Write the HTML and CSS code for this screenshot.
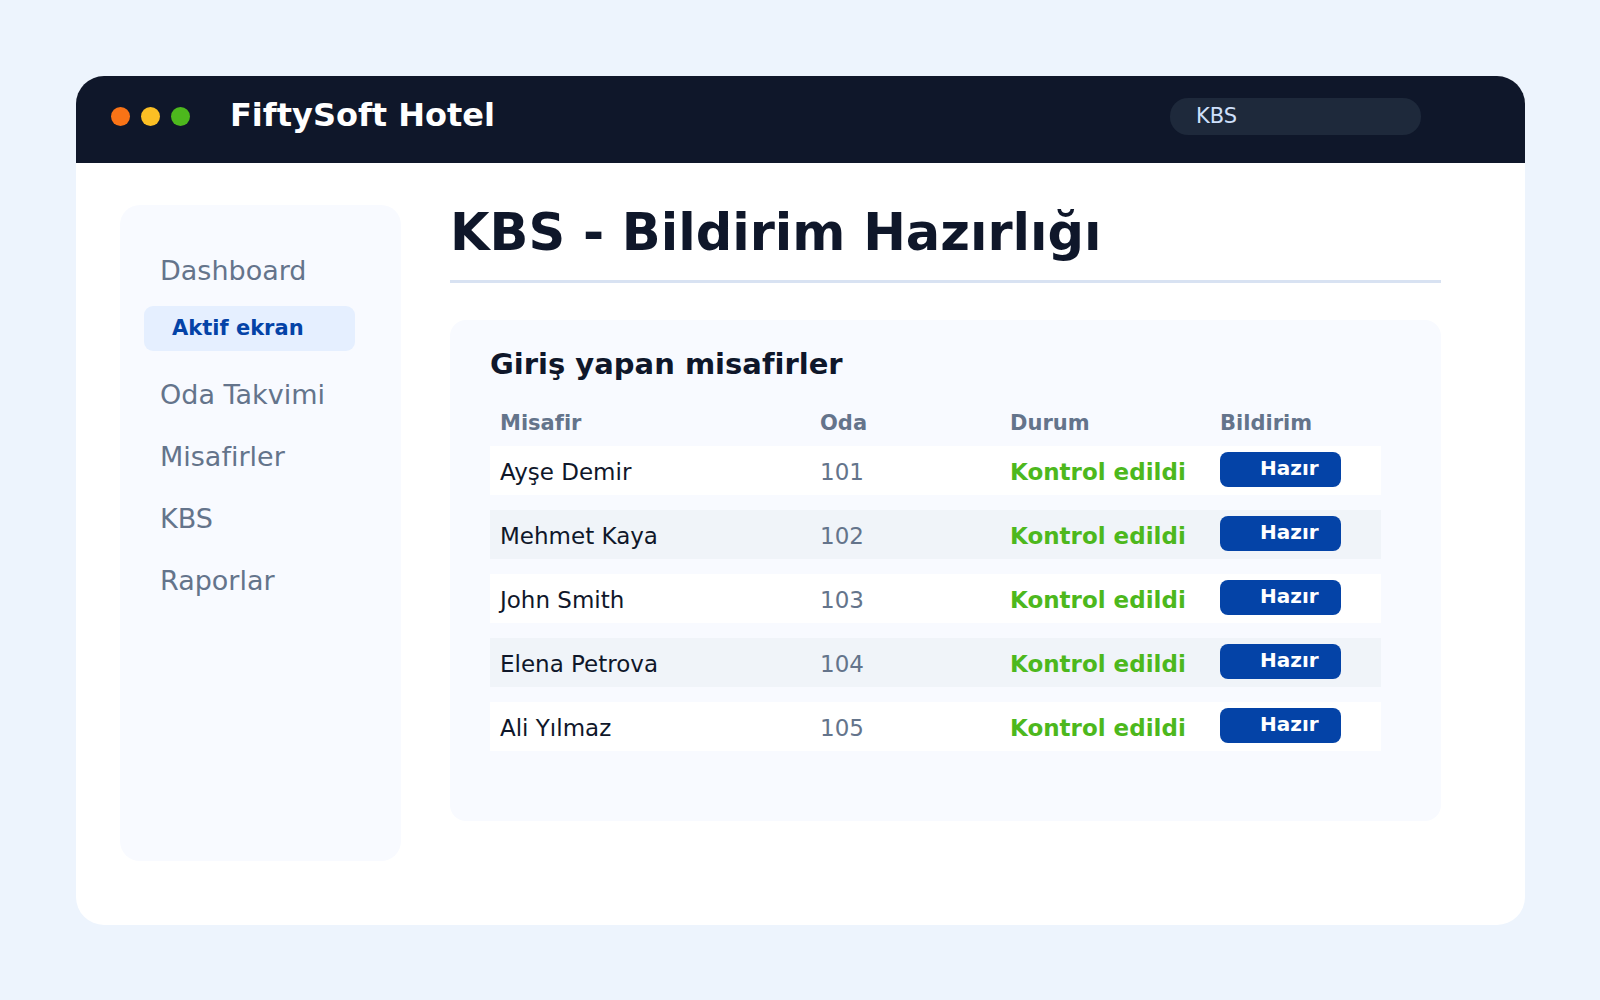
FILE: index.html
```
<!DOCTYPE html>
<html lang="tr">
	<head>
		<meta charset="utf-8">
		<title>FiftySoft Hotel - KBS</title>
		<link rel="stylesheet" href="styles.css">
	</head>
	<body>
		<div class="window">
			<header class="topbar">
				<div class="dots">
					<span class="dot orange"></span>
					<span class="dot yellow"></span>
					<span class="dot green"></span>
				</div>
				<div class="brand">FiftySoft Hotel</div>
				<input class="search" type="text" value="KBS" aria-label="Ara">
			</header>
			<div class="content">
				<nav class="sidebar">
					<a href="#dashboard">Dashboard</a>
					<a href="#aktif" class="active">Aktif ekran</a>
					<a href="#takvim">Oda Takvimi</a>
					<a href="#misafirler">Misafirler</a>
					<a href="#kbs">KBS</a>
					<a href="#raporlar">Raporlar</a>
				</nav>
				<main class="main">
					<h1>KBS - Bildirim Hazırlığı</h1>
					<section class="card">
						<h2>Giriş yapan misafirler</h2>
						<table class="guests">
							<thead>
								<tr>
									<th class="name">Misafir</th>
									<th class="room">Oda</th>
									<th class="status">Durum</th>
									<th class="action">Bildirim</th>
								</tr>
							</thead>
							<tbody>
								<tr>
									<td class="name">Ayşe Demir</td>
									<td class="room">101</td>
									<td class="status">Kontrol edildi</td>
									<td class="action"><button type="button">Hazır</button></td>
								</tr>
								<tr>
									<td class="name">Mehmet Kaya</td>
									<td class="room">102</td>
									<td class="status">Kontrol edildi</td>
									<td class="action"><button type="button">Hazır</button></td>
								</tr>
								<tr>
									<td class="name">John Smith</td>
									<td class="room">103</td>
									<td class="status">Kontrol edildi</td>
									<td class="action"><button type="button">Hazır</button></td>
								</tr>
								<tr>
									<td class="name">Elena Petrova</td>
									<td class="room">104</td>
									<td class="status">Kontrol edildi</td>
									<td class="action"><button type="button">Hazır</button></td>
								</tr>
								<tr>
									<td class="name">Ali Yılmaz</td>
									<td class="room">105</td>
									<td class="status">Kontrol edildi</td>
									<td class="action"><button type="button">Hazır</button></td>
								</tr>
							</tbody>
						</table>
					</section>
				</main>
			</div>
		</div>
	</body>
</html>
```

FILE: styles.css
```
* {
	box-sizing: border-box;
}
body {
	background-color: #EDF4FD;
	color: #0F172A;
	display: flex;
	font-family: "DejaVu Sans", sans-serif;
	font-variant-ligatures: none;
	margin: 0;
	min-height: 100vh;
	padding: 76px 75px 75px 76px;
}
h1, h2 {
	margin: 0;
}

.window {
	background-color: #FFFFFF;
	border-radius: 28px;
	display: flex;
	flex: 1;
	flex-direction: column;
	overflow: hidden;
}

.topbar {
	align-items: flex-start;
	background-color: #0F172A;
	display: flex;
	padding: 22px 104px 28px 35px;
}
.dots {
	display: flex;
	gap: 11px;
	padding-top: 9px;
}
.dot {
	border-radius: 50%;
	height: 19px;
	width: 19px;
}
.orange {
	background-color: #F97316;
}
.yellow {
	background-color: #FBBF24;
}
.green {
	background-color: #4DB81D;
}
.brand {
	color: #FFFFFF;
	font-size: 32px;
	font-weight: bold;
	line-height: 34px;
	margin-left: 40px;
}
.search {
	background-color: #1E293B;
	border: 0;
	border-radius: 18px;
	color: #CFE0FB;
	font-family: inherit;
	font-size: 21px;
	height: 37px;
	margin-left: auto;
	padding: 0 26px 2px;
	width: 251px;
}

.content {
	display: flex;
	flex: 1;
	gap: 49px;
	padding: 42px 84px 64px 44px;
}

.sidebar {
	background-color: #F8FAFF;
	border-radius: 20px;
	flex: 0 0 281px;
	padding: 34px 46px 34px 24px;
}
.sidebar a {
	color: #64748B;
	display: block;
	font-size: 27px;
	line-height: 32px;
	padding: 16px 16px 14px;
	text-decoration: none;
	white-space: nowrap;
}
.sidebar .active {
	background-color: #E5EFFF;
	border-radius: 9px;
	color: #0443A7;
	font-size: 21px;
	font-weight: bold;
	line-height: 45px;
	margin: 5px 0 12px;
	padding: 0 28px;
}

.main {
	flex: 1;
}
.main h1 {
	border-bottom: 3px solid #D8E2F2;
	font-size: 51px;
	line-height: 52px;
	padding: 2px 0 21px;
}

.card {
	background-color: #F8FAFF;
	border-radius: 16px;
	margin-top: 37px;
	padding: 28px 60px 55px 40px;
}
.card h2 {
	font-size: 29px;
	line-height: 32px;
	margin-bottom: 20px;
}

.guests {
	border-spacing: 0 15px;
	table-layout: fixed;
	width: 100%;
}
.guests th {
	color: #64748B;
	font-size: 21px;
	line-height: 16px;
	padding: 0 10px;
	text-align: left;
}
.guests td {
	background-color: #FFFFFF;
	font-size: 23px;
	line-height: 35px;
	padding: 9px 10px 5px;
	white-space: nowrap;
}
.guests tbody tr:nth-child(even) td {
	background-color: #F0F4F9;
}
.guests .room {
	color: #64748B;
	width: 190px;
}
.guests .status {
	width: 210px;
}
.guests td.status {
	color: #4DB81D;
	font-weight: bold;
}
.guests .action {
	width: 171px;
}
.guests td.action {
	padding: 6px 10px 8px;
}
.guests button {
	background-color: #0443A7;
	border: 0;
	border-radius: 8px;
	color: #FFFFFF;
	display: block;
	font-family: inherit;
	font-size: 20px;
	font-weight: bold;
	height: 35px;
	padding: 0 0 3px 40px;
	text-align: left;
	width: 121px;
}
```
